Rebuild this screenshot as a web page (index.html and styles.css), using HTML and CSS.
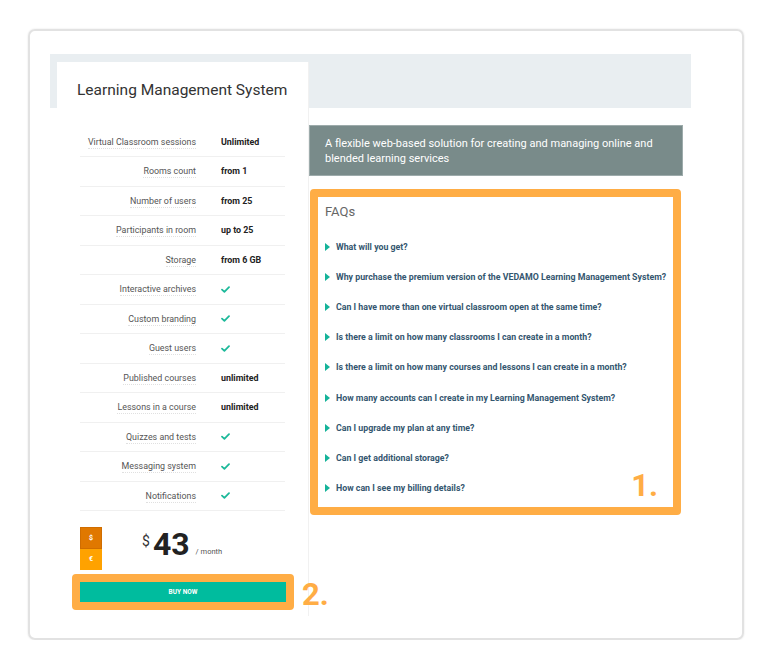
FILE: index.html
```html
<!DOCTYPE html>
<html>
<head>
<meta charset="utf-8">
<link rel="stylesheet" href="styles.css">
</head>
<body>
<div class="frame">
  <div class="inner">
    <div class="card">
      <h1 class="title">Learning Management System</h1>
      <div class="rows">
        <div class="row"><span class="label"><span class="tip">Virtual Classroom sessions</span></span><span class="value">Unlimited</span></div>
        <div class="row"><span class="label"><span class="tip">Rooms count</span></span><span class="value">from 1</span></div>
        <div class="row"><span class="label"><span class="tip">Number of users</span></span><span class="value">from 25</span></div>
        <div class="row"><span class="label"><span class="tip">Participants in room</span></span><span class="value">up to 25</span></div>
        <div class="row"><span class="label"><span class="tip">Storage</span></span><span class="value">from 6 GB</span></div>
        <div class="row"><span class="label"><span class="tip">Interactive archives</span></span><span class="value"><svg class="check" viewBox="0 0 9 7"><polyline points="1,3.6 3.4,5.8 8,1.2"/></svg></span></div>
        <div class="row"><span class="label"><span class="tip">Custom branding</span></span><span class="value"><svg class="check" viewBox="0 0 9 7"><polyline points="1,3.6 3.4,5.8 8,1.2"/></svg></span></div>
        <div class="row"><span class="label"><span class="tip">Guest users</span></span><span class="value"><svg class="check" viewBox="0 0 9 7"><polyline points="1,3.6 3.4,5.8 8,1.2"/></svg></span></div>
        <div class="row"><span class="label"><span class="tip">Published courses</span></span><span class="value">unlimited</span></div>
        <div class="row"><span class="label"><span class="tip">Lessons in a course</span></span><span class="value">unlimited</span></div>
        <div class="row"><span class="label"><span class="tip">Quizzes and tests</span></span><span class="value"><svg class="check" viewBox="0 0 9 7"><polyline points="1,3.6 3.4,5.8 8,1.2"/></svg></span></div>
        <div class="row"><span class="label"><span class="tip">Messaging system</span></span><span class="value"><svg class="check" viewBox="0 0 9 7"><polyline points="1,3.6 3.4,5.8 8,1.2"/></svg></span></div>
        <div class="row"><span class="label"><span class="tip">Notifications</span></span><span class="value"><svg class="check" viewBox="0 0 9 7"><polyline points="1,3.6 3.4,5.8 8,1.2"/></svg></span></div>
      </div>
      <div class="price-row">
        <div class="toggle">
          <div class="cur cur-usd">$</div>
          <div class="cur cur-eur">€</div>
        </div>
        <div class="price"><span class="sym">$</span> <span class="amount">43</span> <span class="per">/ month</span></div>
      </div>
      <div class="hl hl-buy">
        <div class="buy">BUY NOW</div>
        <span class="mark mark-2">2.</span>
      </div>
    </div>
    <div class="side">
      <div class="banner">A flexible web-based solution for creating and managing online and blended learning services</div>
      <div class="hl faq">
        <h2 class="faq-title">FAQs</h2>
        <ul class="faq-list">
          <li>What will you get?</li>
          <li>Why purchase the premium version of the VEDAMO Learning Management System?</li>
          <li>Can I have more than one virtual classroom open at the same time?</li>
          <li>Is there a limit on how many classrooms I can create in a month?</li>
          <li>Is there a limit on how many courses and lessons I can create in a month?</li>
          <li>How many accounts can I create in my Learning Management System?</li>
          <li>Can I upgrade my plan at any time?</li>
          <li>Can I get additional storage?</li>
          <li>How can I see my billing details?</li>
        </ul>
        <span class="mark mark-1">1.</span>
      </div>
    </div>
  </div>
</div>
</body>
</html>
```
FILE: styles.css
```css
* { box-sizing: border-box; }
html, body { margin: 0; padding: 0; background: #fff; }
body { font-family: Roboto, "Liberation Sans", Arial, sans-serif; color: #333; }

.frame {
  margin: 29px 0 0 28px;
  width: 716px;
  height: 611px;
  border: 2px solid #e2e2e2;
  border-radius: 7px;
  box-shadow: 0 0 2px rgba(0,0,0,0.12);
  padding: 23px 0 0 20px;
}

.inner {
  width: 641px;
  display: flex;
  align-items: flex-start;
  padding: 8px 8px 0 7px;
  background: linear-gradient(#e9eef1, #e9eef1) no-repeat top left / 100% 54px;
}

.card {
  width: 252px;
  flex: none;
  background: #fff;
  border-right: 1px solid #f1f1f1;
  padding: 18px 23px 6px 20px;
}

.title {
  margin: 0;
  font-size: 15.5px;
  line-height: 20px;
  font-weight: 400;
  color: #333;
  white-space: nowrap;
}

.rows { margin: 27.5px 0 0 3px; }
.row {
  display: grid;
  grid-template-columns: 116px 1fr;
  column-gap: 25px;
  align-items: center;
  height: 29.5px;
  border-bottom: 1px solid #f0f0f0;
  font-size: 8.9px;
}
.label { text-align: right; color: #555; }
.tip { border-bottom: 1px dotted #e0e0e0; padding-bottom: 1px; }
.value { font-weight: 700; color: #222; display: flex; align-items: center; }
.check { width: 9px; height: 7px; }
.check polyline { fill: none; stroke: #1cb99a; stroke-width: 1.8; stroke-linecap: round; stroke-linejoin: round; }

.price-row {
  display: flex;
  align-items: flex-start;
  margin: 16px 0 0 3px;
}
.toggle { width: 22px; display: flex; flex-direction: column; }
.cur {
  height: 21.5px;
  display: flex;
  align-items: center;
  justify-content: center;
  color: #fff;
  font-size: 7px;
  font-weight: 700;
}
.cur-usd { background: #e07800; border: 1px solid #d06d00; }
.cur-eur { background: #ffa200; }

.price {
  margin: 1px 0 0 40px;
  line-height: 32px;
  white-space: nowrap;
  font-size: 0;
}
.price .sym { font-size: 14px; line-height: 14px; color: #333; vertical-align: 9px; margin-right: 3px; }
.price .amount { font-size: 32px; font-weight: 700; color: #222; margin-right: 6px; }
.price .per { font-size: 7.5px; line-height: 8px; color: #555; vertical-align: 1px; }

.hl {
  position: relative;
  border: 8px solid #ffad45;
  border-radius: 4px;
}
.hl-buy { margin: 3px 0 0 -5px; width: 222px; }
.buy {
  height: 20px;
  background: #00bc9e;
  color: #fff;
  font-size: 6.5px;
  font-weight: 700;
  display: flex;
  align-items: center;
  justify-content: center;
}

.mark {
  position: absolute;
  font-size: 31px;
  font-weight: 700;
  color: #ffad45;
  line-height: 31px;
}
.mark-2 { left: 222px; top: -3px; }
.mark-1 { right: 15px; bottom: 6px; }

.side { width: 374px; flex: none; min-width: 0; }
.banner {
  margin-top: 63px;
  height: 51px;
  background: #798b8a;
  border: 1px solid #9dabab;
  color: #fff;
  font-size: 11px;
  line-height: 15px;
  padding: 10px 14px 0 15px;
}

.faq {
  margin: 13px 2px 0 1px;
  height: 326px;
  background: #fff;
  padding: 7px 6px 0 7px;
}
.faq-title {
  margin: 0;
  font-size: 13px;
  line-height: 16px;
  font-weight: 400;
  color: #666;
}
.faq-list { list-style: none; margin: 12px 0 0; padding: 0; }
.faq-list li {
  height: 30.1px;
  display: flex;
  align-items: center;
  font-size: 8.8px;
  font-weight: 700;
  color: #34566f;
  white-space: nowrap;
}
.faq-list li::before {
  content: "";
  width: 0;
  height: 0;
  border-left: 5px solid #14b399;
  border-top: 4px solid transparent;
  border-bottom: 4px solid transparent;
  margin-right: 6px;
}
```
